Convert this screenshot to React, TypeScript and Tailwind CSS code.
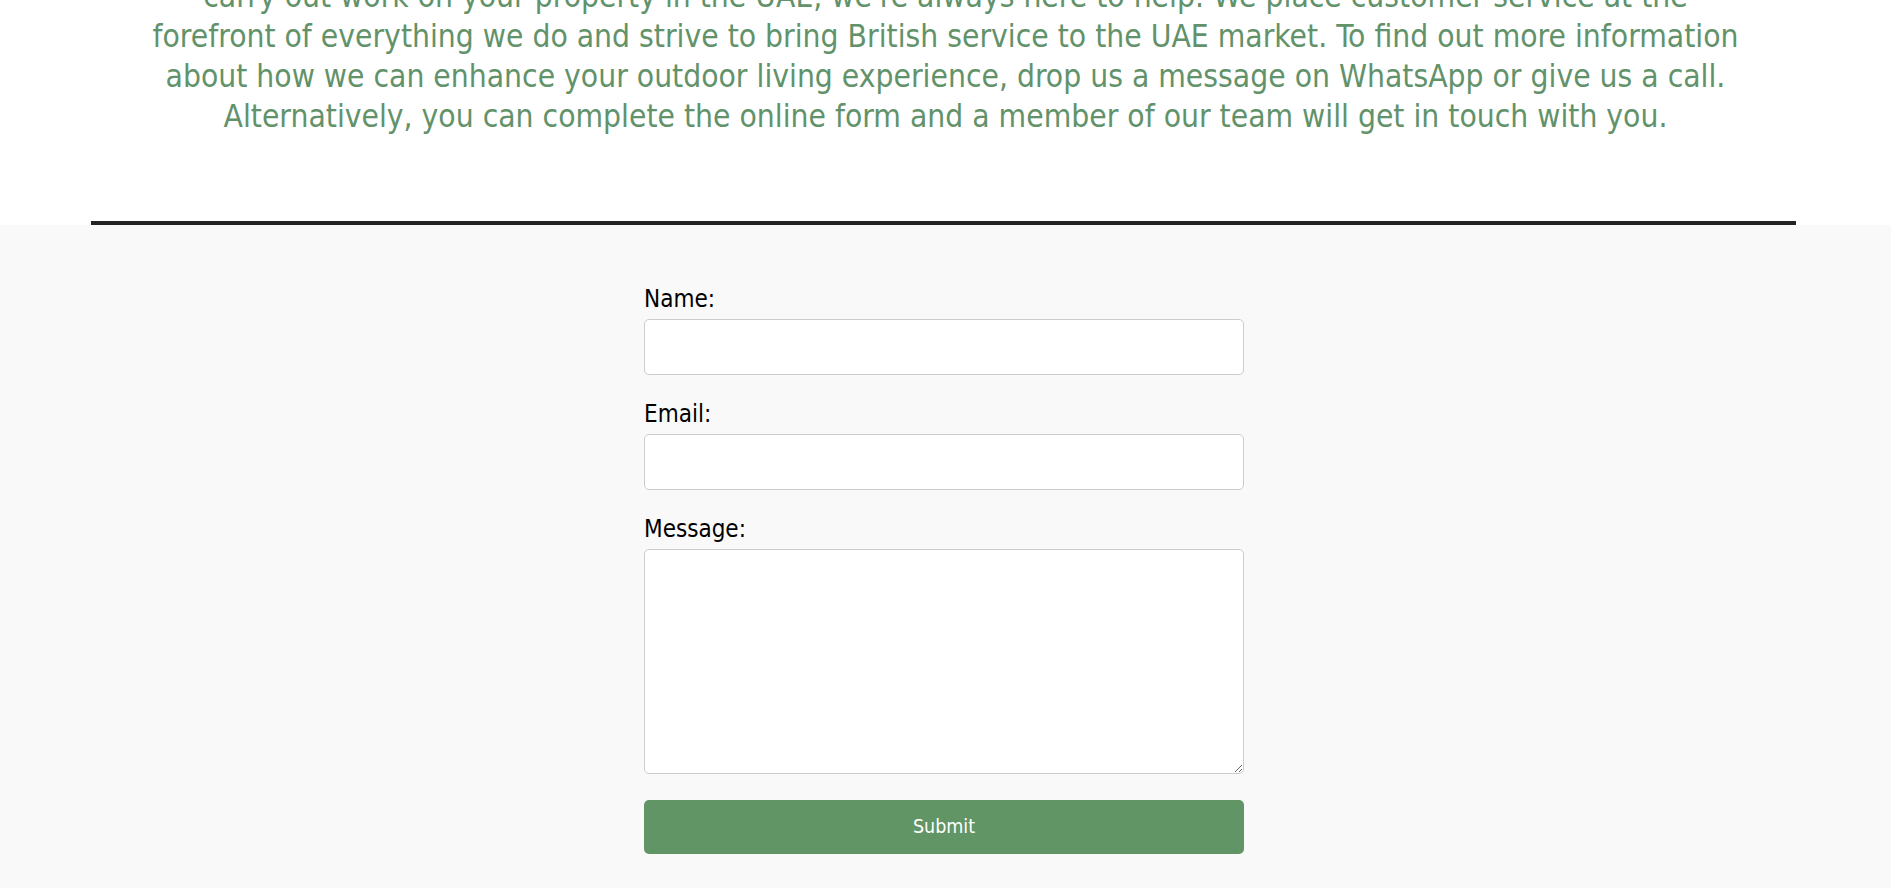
import React from "react";

export default function App() {
  const font = { fontFamily: '"DejaVu Sans Condensed", "DejaVu Sans", Verdana, sans-serif' };
  return (
    <div className="min-h-screen bg-white" style={font}>
      <div className="overflow-hidden">
        <p className="-mt-[24px] mb-[85px] text-center text-[31.5px] leading-[40px] text-[#62926a] whitespace-nowrap">
          carry out work on your property in the UAE, we're always here to help. We place customer service at the
          <br />
          forefront of everything we do and strive to bring British service to the UAE market. To find out more information
          <br />
          about how we can enhance your outdoor living experience, drop us a message on WhatsApp or give us a call.
          <br />
          Alternatively, you can complete the online form and a member of our team will get in touch with you.
        </p>
      </div>
      <div className="ml-[91px] w-[1705px] h-[4px] bg-[#232323]" />
      <section className="bg-[#f9f9f9] pt-[59px] pb-[34px]">
        <form className="w-[600px] ml-[644px] flex flex-col" onSubmit={(e) => e.preventDefault()}>
          <label className="block text-[24px] leading-[30px] text-black mb-[5px]">Name:</label>
          <input type="text" className="block w-full h-[56px] border border-[#cccccc] rounded-[5px] bg-white" />
          <label className="block text-[24px] leading-[30px] text-black mt-[24px] mb-[5px]">Email:</label>
          <input type="email" className="block w-full h-[56px] border border-[#cccccc] rounded-[5px] bg-white" />
          <label className="block text-[24px] leading-[30px] text-black mt-[24px] mb-[5px]">Message:</label>
          <textarea className="block w-full h-[225px] border border-[#cccccc] rounded-[5px] bg-white" />
          <button type="submit" className="mt-[26px] h-[54px] w-full rounded-[5px] bg-[#619565] text-white text-[19.5px]">
            Submit
          </button>
        </form>
      </section>
    </div>
  );
}
